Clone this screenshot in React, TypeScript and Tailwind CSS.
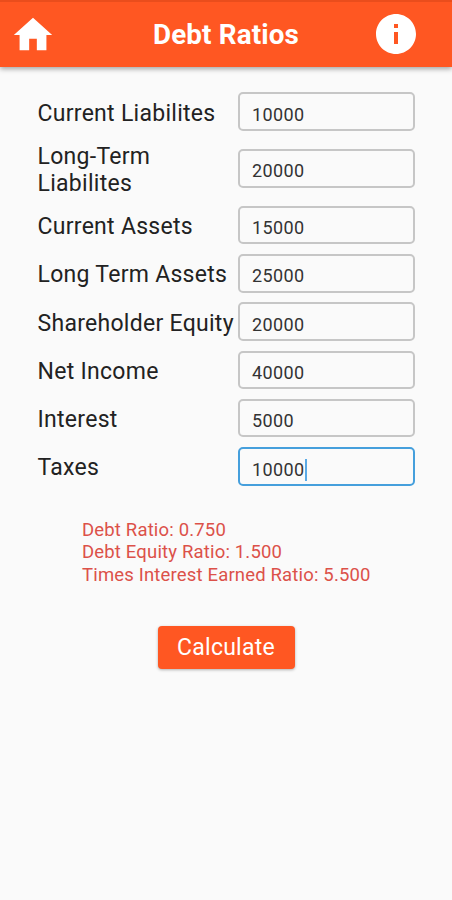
import { useState } from "react";
import { MdHome, MdInfo } from "react-icons/md";

type Field = {
  label: string;
  value: string;
  focused?: boolean;
  tall?: boolean;
};

const FIELDS: Field[] = [
  { label: "Current Liabilites", value: "10000" },
  { label: "Long-Term Liabilites", value: "20000", tall: true },
  { label: "Current Assets", value: "15000" },
  { label: "Long Term Assets", value: "25000" },
  { label: "Shareholder Equity", value: "20000" },
  { label: "Net Income", value: "40000" },
  { label: "Interest", value: "5000" },
  { label: "Taxes", value: "10000", focused: true },
];

const RESULTS = [
  "Debt Ratio: 0.750",
  "Debt Equity Ratio: 1.500",
  "Times Interest Earned Ratio: 5.500",
];

function AppBar() {
  return (
    <header className="flex h-[67px] items-center border-t-2 border-[#ea4d1c] bg-[#ff5722] pr-8 pl-[10px] text-white shadow-[0_2px_5px_rgba(0,0,0,0.35)]">
      <button aria-label="Home" className="w-12">
        <MdHome className="size-[46px]" />
      </button>
      <h1 className="grow pl-[22px] text-center text-[27.8px] font-bold tracking-[0.15px]">
        Debt Ratios
      </h1>
      <button aria-label="Info" className="-mt-0.5 w-12">
        <MdInfo className="size-12" />
      </button>
    </header>
  );
}

function FieldRow({ field }: { field: Field }) {
  return (
    <div className={`flex items-center ${field.tall ? "h-[65px]" : "h-[48.3px]"}`}>
      <label className="w-[200px] shrink-0 pt-[2.8px] text-[23px] leading-[27px] tracking-[0.28px] text-[#222222]">
        {field.label}
      </label>
      <div
        className={`flex h-[38.5px] w-[177px] items-center rounded-[5px] border-2 pt-[6.2px] pl-[12.5px] ${
          field.focused ? "border-[#459fdc]" : "border-[#c6c6c6]"
        }`}
      >
        <span className="text-[18px] leading-5 tracking-[0.4px] text-[#333333]">
          {field.value}
        </span>
        {field.focused && <span className="h-[22px] w-[2.5px] bg-[#5aaae6]" />}
      </div>
    </div>
  );
}

export default function App() {
  const [fields] = useState(FIELDS);

  return (
    <div className="min-h-[900px] w-full bg-[#fafafa] font-[Roboto,sans-serif]">
      <AppBar />

      <main className="pt-[20.6px]">
        {/* Inputs */}
        <div className="pl-[37.5px]">
          {fields.map((field) => (
            <FieldRow key={field.label} field={field} />
          ))}
        </div>

        {/* Results */}
        <div className="mt-[28.4px] pl-[82px] text-[18.5px] leading-[22.4px] tracking-[0.17px] text-[#dc5149]">
          {RESULTS.map((line) => (
            <p key={line}>{line}</p>
          ))}
        </div>

        <button className="mx-auto mt-[39.3px] flex h-[43px] w-[137px] items-center justify-center rounded-[4px] bg-[#ff5722] pt-0.5 text-[23px] tracking-[0.25px] text-white shadow-[0_1px_3px_rgba(0,0,0,0.3)]">
          Calculate
        </button>
      </main>
    </div>
  );
}
